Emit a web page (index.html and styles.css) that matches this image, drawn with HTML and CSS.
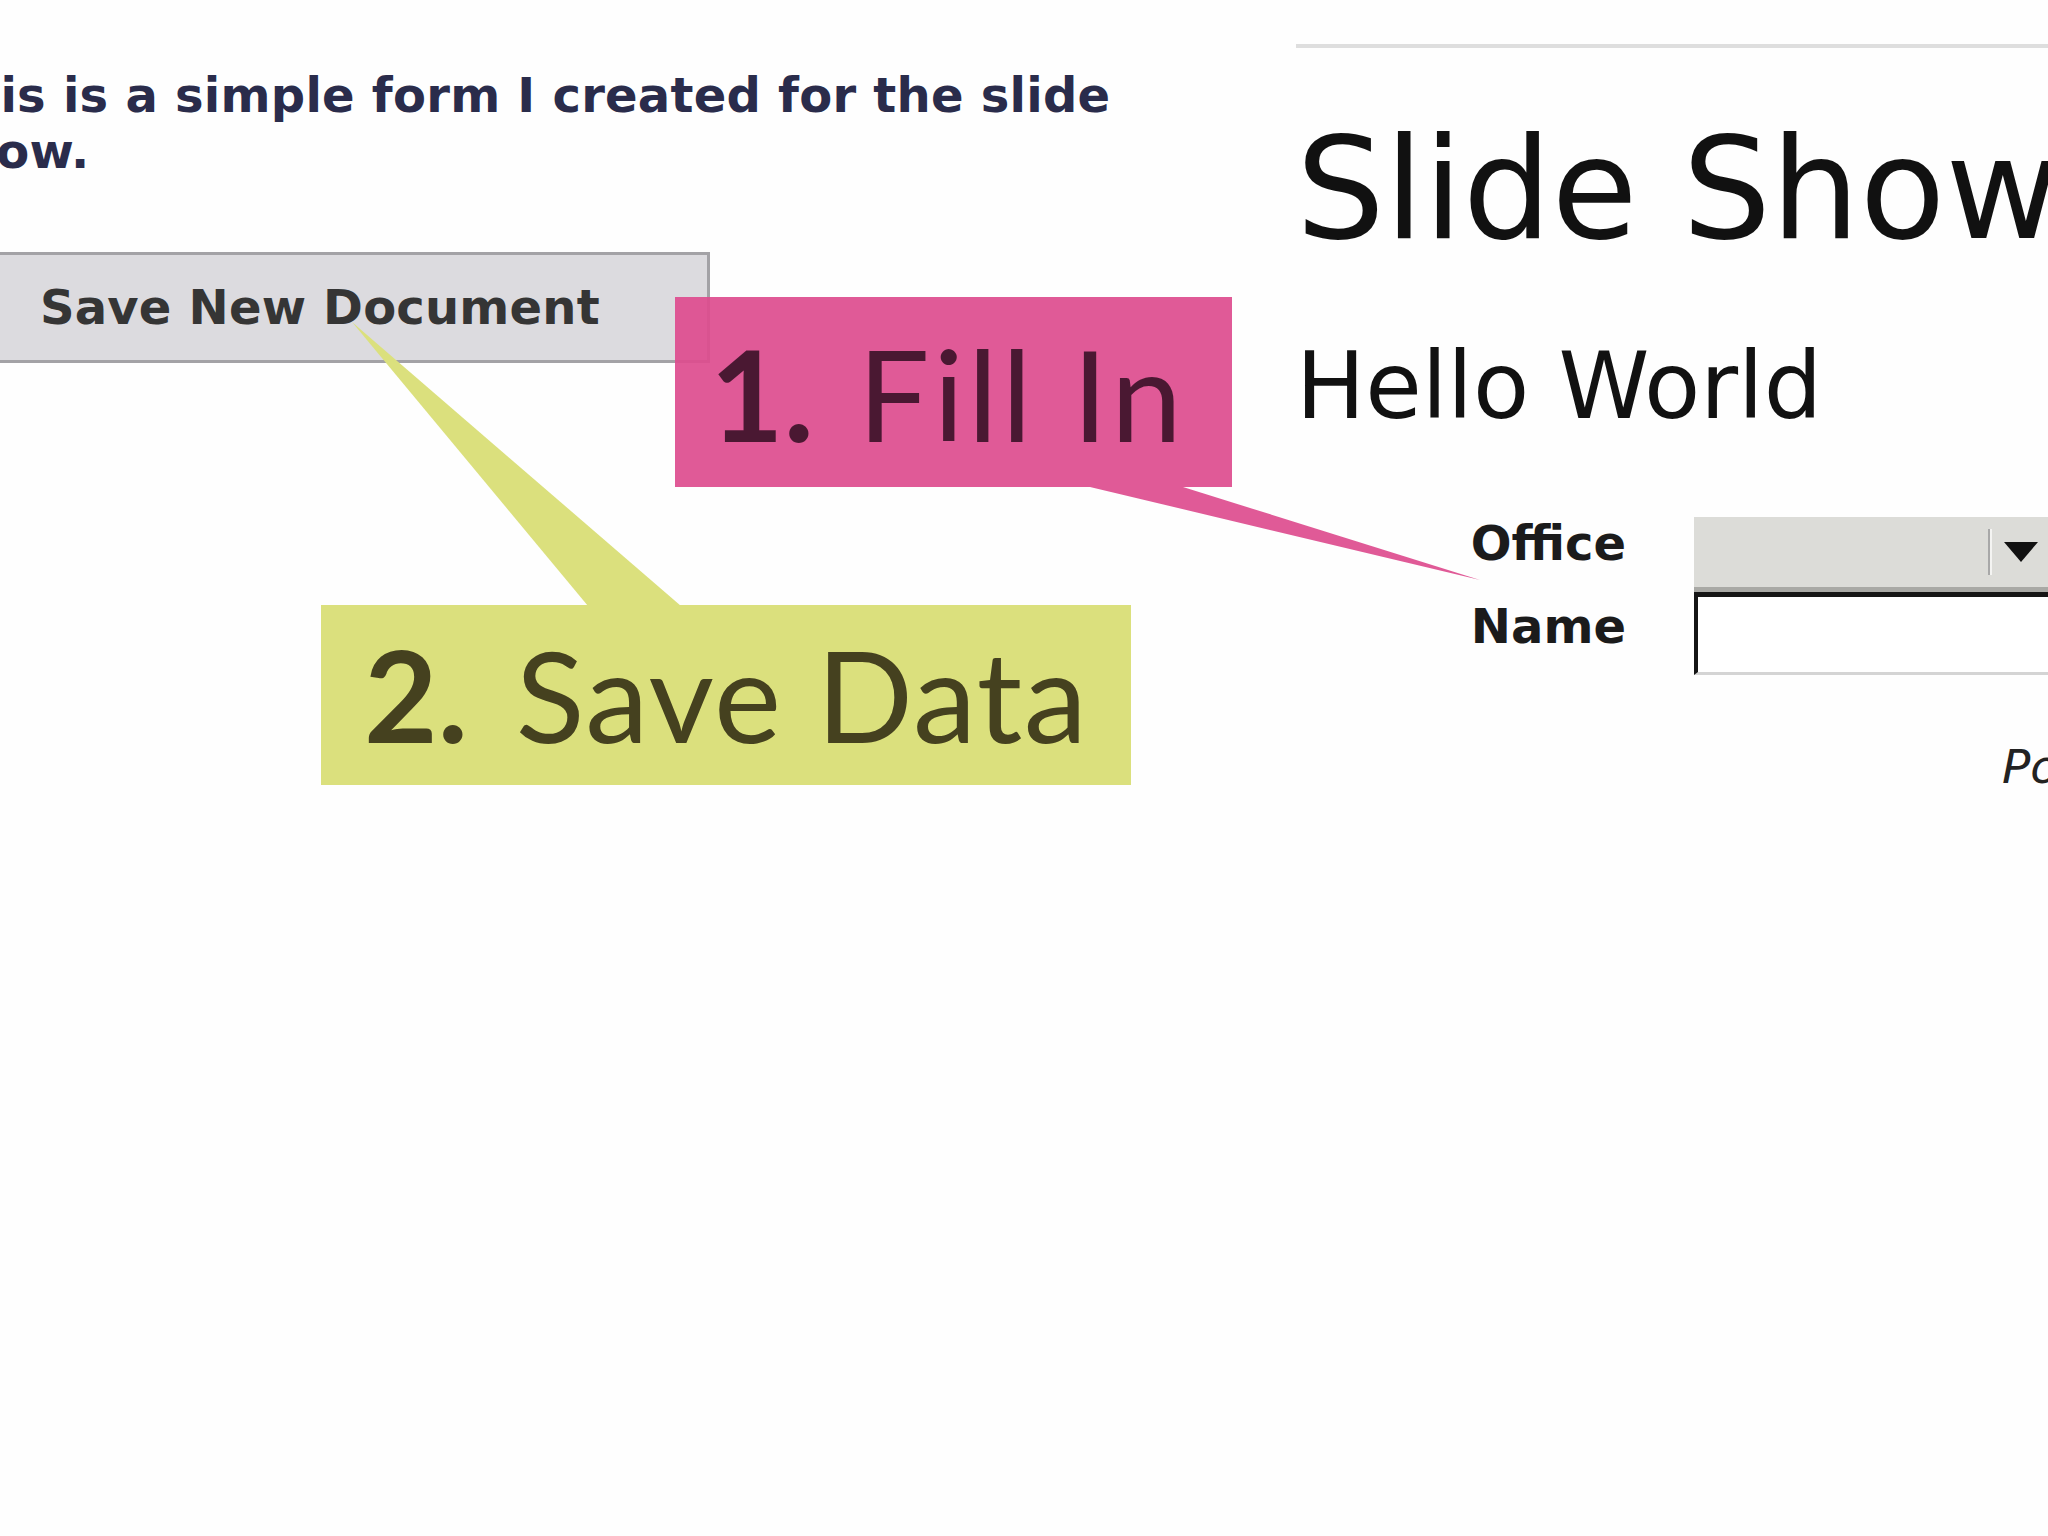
FILE: index.html
```html
<!DOCTYPE html>
<html lang="en">
<head>
<meta charset="utf-8">
<title>Slide Show form</title>
<link rel="stylesheet" href="styles.css">
</head>
<body>
<div class="page">
  <div class="col-left">
    <p class="intro">This is a simple form I created for the slide show.</p>
    <button class="save-btn" type="button">Save New Document</button>
  </div>
  <div class="col-right">
    <h1 class="title">Slide Show</h1>
    <h2 class="subtitle">Hello World</h2>
    <div class="form">
      <label class="lbl">Office</label>
      <div class="select"><span class="sel-div"></span><span class="sel-arrow"></span></div>
      <label class="lbl lbl-name">Name</label>
      <div class="input"></div>
    </div>
    <div class="note">Post</div>
  </div>
</div>

<svg class="pointers" width="2048" height="1536" viewBox="0 0 2048 1536" aria-hidden="true">
  <polygon class="ptr-yellow" points="352,322 588,606 681,606"/>
  <polygon class="ptr-pink" points="1090,487 1183,487 1480,580"/>
</svg>

<div class="callout callout-pink"><span class="num">1.</span><span class="txt">Fill In</span></div>
<div class="callout callout-yellow"><span class="num">2.</span><span class="txt">Save Data</span></div>
</body>
</html>
```

FILE: styles.css
```css
html, body {
  margin: 0;
  padding: 0;
}

body {
  width: 2048px;
  height: 1536px;
  overflow: hidden;
  position: relative;
  background: #fefefe;
  font-family: "DejaVu Sans", "Liberation Sans", sans-serif;
}

.page {
  display: flex;
  align-items: flex-start;
}

/* ---------- left column ---------- */
.col-left {
  flex: none;
  width: 1363px;
  margin-left: -67px;
}

.intro {
  margin: 67px 0 0;
  width: 1240px;
  font-weight: 700;
  font-size: 48px;
  line-height: 56px;
  letter-spacing: 0.25px;
  color: #2a2c4b;
}

.save-btn {
  display: block;
  box-sizing: border-box;
  margin: 73px 0 0 50px;
  width: 727px;
  height: 111px;
  padding: 0 0 0 54px;
  border: 3px solid #a3a2a6;
  border-radius: 0;
  background: #dcdbdf;
  font-family: "DejaVu Sans", sans-serif;
  font-weight: 700;
  font-size: 48px;
  line-height: 105px;
  letter-spacing: 0.2px;
  color: #353535;
  text-align: left;
}

/* ---------- right column ---------- */
.col-right {
  flex: none;
  width: 900px;
  margin-top: 44px;
  border-top: 4px solid #dedede;
}

.title {
  margin: 60px 0 0;
  font-weight: 400;
  font-size: 140px;
  line-height: 164px;
  color: #111111;
  white-space: nowrap;
}

.subtitle {
  margin: 61px 0 0;
  font-weight: 400;
  font-size: 92px;
  line-height: 107px;
  color: #111111;
  white-space: nowrap;
}

.form {
  margin-top: 77px;
  display: grid;
  grid-template-columns: 330px 420px;
  column-gap: 68px;
  align-items: start;
}

.lbl {
  font-weight: 700;
  font-size: 48px;
  line-height: 52px;
  text-align: right;
  color: #1b1b1b;
}

.lbl-name {
  padding-top: 8px;
}

.select {
  box-sizing: border-box;
  height: 75px;
  background: #dcdcd8;
  border-bottom: 5px solid #a9a9a5;
  display: flex;
  align-items: center;
  padding-left: 294px;
}

.sel-div {
  width: 2px;
  height: 46px;
  background: #a8a8a8;
  border-right: 2px solid #f4f4f2;
}

.sel-arrow {
  margin-left: 12px;
  width: 0;
  height: 0;
  border-left: 17px solid transparent;
  border-right: 17px solid transparent;
  border-top: 20px solid #111111;
}

.input {
  box-sizing: border-box;
  height: 83px;
  background: #ffffff;
  border-top: 5px solid #151515;
  border-left: 4px solid #151515;
  border-bottom: 3px solid #d4d4d4;
}

.note {
  margin: 65px 0 0 706px;
  font-style: italic;
  font-size: 47px;
  line-height: 54px;
  color: #222222;
  white-space: nowrap;
}

/* ---------- callouts (overlay) ---------- */
.pointers {
  position: absolute;
  left: 0;
  top: 0;
  pointer-events: none;
}

.ptr-yellow {
  fill: #dbe07d;
}

.ptr-pink {
  fill: #e05a97;
}

.callout {
  position: absolute;
  box-sizing: border-box;
  display: flex;
  align-items: baseline;
  font-family: "Lato", "Open Sans", sans-serif;
  font-size: 127px;
  line-height: 125px;
  white-space: nowrap;
}

.callout .num {
  font-weight: 700;
}

.callout .txt {
  font-weight: 400;
  letter-spacing: 2px;
}

.callout-pink {
  left: 675px;
  top: 297px;
  width: 557px;
  height: 190px;
  padding: 34px 0 0 35px;
  background: rgba(221, 76, 142, 0.92);
  color: #4a1832;
}

.callout-pink .txt {
  margin-left: 44px;
  letter-spacing: 4px;
}

.callout-yellow {
  left: 321px;
  top: 605px;
  width: 810px;
  height: 180px;
  padding: 27px 0 0 43px;
  background: #dbe07d;
  color: #45411f;
}

.callout-yellow .txt {
  margin-left: 48px;
  letter-spacing: 1.5px;
}
```
